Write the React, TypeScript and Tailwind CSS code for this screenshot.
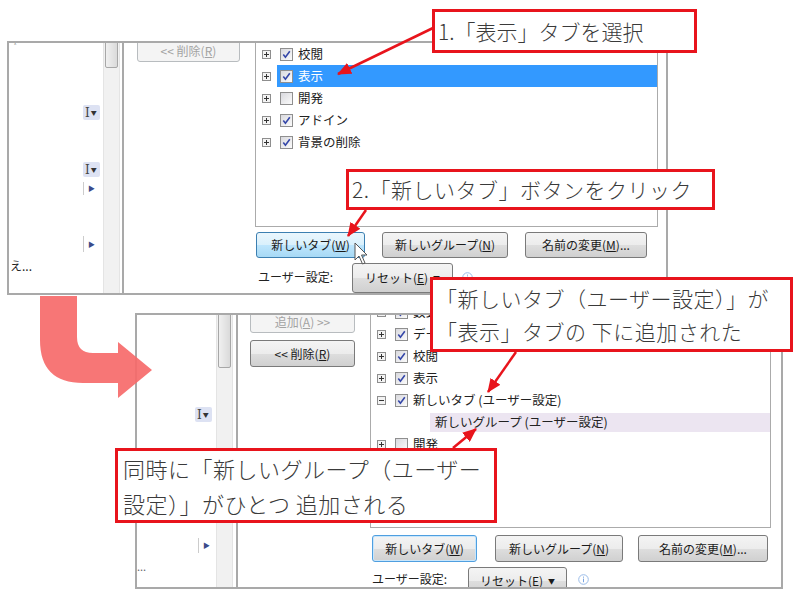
import React from "react";

const btnBase =
  "flex items-center justify-center rounded-[3px] border text-[12px] leading-none whitespace-nowrap shrink-0";
const btnNormal =
  "border-[#7a7a7a] bg-[linear-gradient(#f4f4f4,#ececec_50%,#dedede_50%,#d0d0d0)] text-[#1b1b1b]";
const btnHover =
  "border-[#3c7fb1] bg-[linear-gradient(#eaf6fd,#d9f0fc_50%,#bee6fd_50%,#a7d9f5)] text-[#1b1b1b]";
const btnFocus =
  "border-[#4f9fe0] bg-[linear-gradient(#f4f4f4,#ececec_50%,#dedede_50%,#d0d0d0)] text-[#1b1b1b] shadow-[inset_0_0_0_1px_#c9e6fb]";
const btnDisabled = "border-[#b8bcbf] bg-[#f4f4f4] text-[#a3a3a3]";

function Expander({ open }: { open?: boolean }) {
  return (
    <svg width="9" height="9" viewBox="0 0 9 9" className="shrink-0">
      <rect x="0.5" y="0.5" width="8" height="8" fill="#f3f3f3" stroke="#8e8e8e" />
      <path d="M2 4.5h5" stroke="#333" strokeWidth="1" />
      {!open && <path d="M4.5 2v5" stroke="#333" strokeWidth="1" />}
    </svg>
  );
}

function Check({ checked }: { checked?: boolean }) {
  return (
    <span className="w-[13px] h-[13px] shrink-0 border border-[#8f8f8f] bg-[linear-gradient(135deg,#d9d9de,#fbfbfb)] flex items-center justify-center">
      {checked && (
        <svg width="9" height="9" viewBox="0 0 9 9">
          <path d="M1.3 4.6 L3.4 7.2 L7.8 1.2" stroke="#3446a8" strokeWidth="1.6" fill="none" />
        </svg>
      )}
    </span>
  );
}

function TreeRow({
  label,
  checked,
  open,
  selected,
}: {
  label: string;
  checked?: boolean;
  open?: boolean;
  selected?: boolean;
}) {
  return (
    <div className="h-[22px] flex items-center shrink-0">
      <div className="w-[21px] h-full flex items-center pl-[6px] shrink-0">
        <Expander open={open} />
      </div>
      <div
        className={
          selected
            ? "flex-1 h-full flex items-center pl-[3px] gap-[5px] bg-[#3399ff] text-white"
            : "flex-1 h-full flex items-center pl-[3px] gap-[5px] text-[#222]"
        }
      >
        <Check checked={checked} />
        <span className="text-[12.5px] leading-none whitespace-nowrap">{label}</span>
      </div>
    </div>
  );
}

function IBeam() {
  return (
    <div className="w-[17px] h-[15px] bg-[#dde2f3] rounded-[2px] flex items-center pl-[2px] gap-[1px]">
      <span className="font-['DejaVu_Serif',serif] text-[12px] leading-none text-[#444]">I</span>
      <span className="text-[6px] leading-none text-[#333]">▼</span>
    </div>
  );
}

function Tri({ h }: { h: string }) {
  return (
    <div className={"flex items-center " + h}>
      <div className="w-px h-full bg-[#cccccc]" />
      <span className="ml-[4px] text-[7px] leading-none text-[#3b4b8a]">▶</span>
    </div>
  );
}

function Info() {
  return (
    <svg width="11" height="11" viewBox="0 0 11 11" className="shrink-0">
      <circle cx="5.5" cy="5.5" r="4.8" fill="none" stroke="#9bbce8" />
      <rect x="5" y="4.6" width="1" height="3.6" fill="#7aa5e2" />
      <rect x="5" y="2.6" width="1" height="1.1" fill="#7aa5e2" />
    </svg>
  );
}

function Scrollbar({ thumb }: { thumb: string }) {
  return (
    <div className="w-[17px] h-full bg-[#f1f1f1] border-x border-[#e4e4e4] shrink-0">
      <div
        className={
          "mx-[1px] rounded-[2px] border border-[#a7a7a7] bg-[linear-gradient(90deg,#f0f0f0,#dadada)] -mt-[3px] " +
          thumb
        }
      />
    </div>
  );
}

export default function App() {
  return (
    <div className="relative w-[800px] h-[600px] bg-white overflow-hidden font-['Noto_Sans_CJK_JP','Noto_Sans',sans-serif] flex flex-col">
      {/* ===== Top screenshot ===== */}
      <div className="mt-[41px] ml-[7px] w-[661px] h-[254px] border-2 border-[#a9a9a9] bg-white flex overflow-hidden shrink-0">
        {/* left pane */}
        <div className="w-[94px] h-full flex flex-col shrink-0">
          <div className="h-[10px] pl-[5px] text-[8px] leading-none text-[#555]">˄</div>
          <div className="mt-[52px] ml-[74px] h-[15px]">
            <IBeam />
          </div>
          <div className="mt-[42px] ml-[74px] h-[15px]">
            <IBeam />
          </div>
          <div className="mt-[5px] ml-[74px]">
            <Tri h="h-[13px]" />
          </div>
          <div className="mt-[41px] ml-[74px]">
            <Tri h="h-[16px]" />
          </div>
          <div className="mt-[7px] ml-[1px] h-[14px] text-[12px] leading-[14px] text-[#222]">え...</div>
        </div>
        <Scrollbar thumb="h-[28px]" />
        <div className="w-[2px] shrink-0" />
        <div className="w-[2px] h-full bg-[#a9a9a9] shrink-0" />
        {/* middle pane */}
        <div className="w-[131px] h-full flex flex-col shrink-0">
          <div className={btnBase + " " + btnDisabled + " -mt-[3px] ml-[13px] w-[103px] h-[22px]"}>
            {"<< 削除("}
            <span className="underline">R</span>)
          </div>
        </div>
        {/* right pane */}
        <div className="flex-1 h-full flex flex-col">
          <div className="w-[403px] h-[184px] border-x border-b border-[#ababab] flex flex-col overflow-hidden shrink-0">
            <TreeRow label="校閲" checked />
            <TreeRow label="表示" checked selected />
            <TreeRow label="開発" />
            <TreeRow label="アドイン" checked />
            <TreeRow label="背景の削除" checked />
          </div>
          <div className="mt-[5px] ml-[1px] flex gap-[17px]">
            <div className={btnBase + " " + btnHover + " w-[109px] h-[26px]"}>
              新しいタブ(<span className="underline">W</span>)
            </div>
            <div className={btnBase + " " + btnNormal + " w-[126px] h-[26px]"}>
              新しいグループ(<span className="underline">N</span>)
            </div>
            <div className={btnBase + " " + btnNormal + " w-[122px] h-[26px]"}>
              名前の変更(<span className="underline">M</span>)...
            </div>
          </div>
          <div className="mt-[5px] ml-[3px] flex items-center h-[28px]">
            <span className="w-[94px] text-[12px] leading-none text-[#222] whitespace-nowrap">ユーザー設定:</span>
            <div className={btnBase + " " + btnNormal + " w-[101px] h-[30px] mt-[2px] gap-[5px]"}>
              <span>
                リセット(<span className="underline">E</span>)
              </span>
              <span className="text-[7px]">▼</span>
            </div>
            <div className="ml-[9px]">
              <Info />
            </div>
          </div>
        </div>
      </div>

      {/* ===== Bottom screenshot ===== */}
      <div className="mt-[18px] ml-[135px] w-[648px] h-[276px] border-2 border-[#a9a9a9] bg-white flex overflow-hidden shrink-0">
        {/* left pane */}
        <div className="w-[79px] h-full flex flex-col shrink-0">
          <div className="mt-[92px] ml-[58px] h-[15px]">
            <IBeam />
          </div>
          <div className="mt-[116px] ml-[61px]">
            <Tri h="h-[15px]" />
          </div>
          <div className="mt-[8px] h-[10px] text-[11px] leading-[10px] text-[#666]">...</div>
        </div>
        <Scrollbar thumb="h-[56px]" />
        <div className="w-[3px] shrink-0" />
        <div className="w-[2px] h-full bg-[#a9a9a9] shrink-0" />
        {/* middle pane */}
        <div className="w-[132px] h-full flex flex-col shrink-0">
          <div className={btnBase + " " + btnDisabled + " -mt-[4px] ml-[12px] w-[105px] h-[22px]"}>
            追加(<span className="underline">A</span>){" >>"}
          </div>
          <div className={btnBase + " " + btnNormal + " mt-[7px] ml-[12px] w-[105px] h-[27px]"}>
            {"<< 削除("}
            <span className="underline">R</span>)
          </div>
        </div>
        {/* right pane */}
        <div className="flex-1 h-full flex flex-col">
          <div className="w-[401px] h-[213px] border-x border-b border-[#ababab] flex flex-col overflow-hidden shrink-0">
            <div className="-mt-[14px] flex flex-col">
              <TreeRow label="数式" checked open />
              <TreeRow label="データ" checked />
              <TreeRow label="校閲" checked />
              <TreeRow label="表示" checked />
              <TreeRow label="新しいタブ (ユーザー設定)" checked open />
              <div className="h-[22px] flex items-center shrink-0">
                <div className="ml-[59px] flex-1 h-[19px] bg-[#ece5f1] flex items-center pl-[5px]">
                  <span className="text-[12.5px] leading-none text-[#222] whitespace-nowrap">新しいグループ (ユーザー設定)</span>
                </div>
              </div>
              <TreeRow label="開発" />
            </div>
          </div>
          <div className="mt-[7px] ml-[2px] flex">
            <div className={btnBase + " " + btnFocus + " w-[105px] h-[27px]"}>
              新しいタブ(<span className="underline">W</span>)
            </div>
            <div className={btnBase + " " + btnNormal + " ml-[18px] w-[128px] h-[27px]"}>
              新しいグループ(<span className="underline">N</span>)
            </div>
            <div className={btnBase + " " + btnNormal + " ml-[15px] w-[130px] h-[27px]"}>
              名前の変更(<span className="underline">M</span>)...
            </div>
          </div>
          <div className="mt-[3px] ml-[2px] flex items-center h-[28px]">
            <span className="w-[96px] text-[12px] leading-none text-[#222] whitespace-nowrap">ユーザー設定:</span>
            <div className={btnBase + " " + btnNormal + " w-[99px] h-[28px] mt-[4px] gap-[5px]"}>
              <span>
                リセット(<span className="underline">E</span>)
              </span>
              <span className="text-[7px]">▼</span>
            </div>
            <div className="ml-[11px]">
              <Info />
            </div>
          </div>
        </div>
      </div>

      {/* ===== Callouts ===== */}
      <div className="absolute left-[432px] top-[9px] w-[265px] h-[44px] border-[3px] border-[#e8141c] bg-white flex items-center pl-[3px]">
        <span className="text-[21px] font-light leading-none text-[#3a3a3a] whitespace-nowrap">1.「表示」タブを選択</span>
      </div>
      <div className="absolute left-[346px] top-[169px] w-[369px] h-[41px] border-[3px] border-[#e8141c] bg-white flex items-center pl-[3px]">
        <span className="text-[21px] font-light leading-none tracking-[0.5px] text-[#3a3a3a] whitespace-nowrap">2.「新しいタブ」ボタンをクリック</span>
      </div>
      <div className="absolute left-[430px] top-[277px] w-[363px] h-[75px] border-[3px] border-[#e8141c] bg-white pl-[3px] pt-[2px]">
        <div className="text-[21px] font-light leading-[33px] tracking-[0.5px] text-[#3a3a3a] whitespace-nowrap">
          「新しいタブ（ユーザー設定）」が
          <br />
          「表示」タブの 下に追加された
        </div>
      </div>
      <div className="absolute left-[115px] top-[448px] w-[382px] h-[75px] border-[3px] border-[#e8141c] bg-white pl-[5px]">
        <div className="text-[22px] font-light leading-[35px] tracking-[0.5px] text-[#3a3a3a] whitespace-nowrap">
          同時に「新しいグループ（ユーザー
          <br />
          設定）」がひとつ 追加される
        </div>
      </div>

      {/* ===== Arrows & cursor overlay ===== */}
      <svg className="absolute left-0 top-0 pointer-events-none" width="800" height="600" viewBox="0 0 800 600">
        <defs>
          <marker
            id="ah"
            markerUnits="userSpaceOnUse"
            markerWidth="14"
            markerHeight="12"
            refX="13"
            refY="6"
            orient="auto"
          >
            <path d="M0,0 L14,6 L0,12 z" fill="#e8141c" />
          </marker>
        </defs>
        <path
          d="M40 296 L40 340 Q40 383 83 383 L118 383 L118 398 L152 370 L118 342 L118 353 L93 353 Q77 353 77 337 L77 296 Z"
          fill="#f66a6a"
          fillOpacity="0.92"
        />
        <line x1="433" y1="28" x2="338" y2="74" stroke="#e8141c" strokeWidth="2.5" markerEnd="url(#ah)" />
        <line x1="366" y1="210" x2="348" y2="236" stroke="#e8141c" strokeWidth="2.5" markerEnd="url(#ah)" />
        <line x1="516" y1="352" x2="488" y2="392" stroke="#e8141c" strokeWidth="2.5" markerEnd="url(#ah)" />
        <line x1="453" y1="448" x2="476" y2="429" stroke="#e8141c" strokeWidth="2.5" markerEnd="url(#ah)" />
        <path
          d="M355 243 L355 260 L359 256 L362.5 264 L365 263 L361.5 255 L367 255 Z"
          fill="#ffffff"
          stroke="#555"
          strokeWidth="1"
          strokeLinejoin="round"
        />
      </svg>
    </div>
  );
}
